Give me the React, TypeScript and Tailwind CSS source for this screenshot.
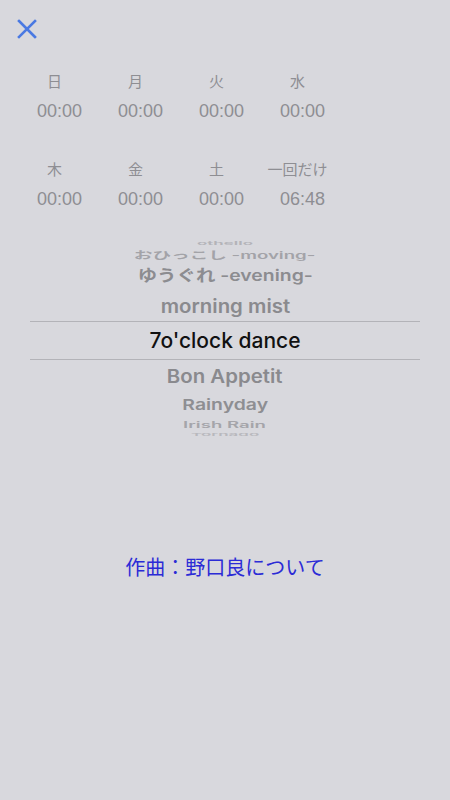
import React from "react";

const days = [
  { label: "日", time: "00:00" },
  { label: "月", time: "00:00" },
  { label: "火", time: "00:00" },
  { label: "水", time: "00:00" },
  { label: "木", time: "00:00" },
  { label: "金", time: "00:00" },
  { label: "土", time: "00:00" },
  { label: "一回だけ", time: "06:48" },
];

const DayCell = ({ label, time }: { label: string; time: string }) => (
  <div className="flex flex-col items-center">
    <div className="h-[20px] leading-[20px] text-[15px] text-[#8e8e93]">{label}</div>
    <div className="mt-[8px] pl-[10px] h-[22px] leading-[22px] text-[18px] text-[#8e8e93]">{time}</div>
  </div>
);

const App = () => {
  return (
    <div className="w-[450px] h-[800px] bg-[#d8d8dd] font-['Liberation_Sans','Noto_Sans_CJK_JP',sans-serif] overflow-hidden">
      <div className="pt-[19px] pl-[17px]">
        <svg width="20" height="20" viewBox="0 0 20 20">
          <path d="M2 2L18 18M18 2L2 18" stroke="#4a79e2" strokeWidth="2.6" strokeLinecap="square" />
        </svg>
      </div>

      <div className="ml-[14px] mt-[33px] w-[324px] grid grid-cols-4">
        {days.slice(0, 4).map((d) => (
          <DayCell key={d.label} {...d} />
        ))}
      </div>
      <div className="ml-[14px] mt-[38px] w-[324px] grid grid-cols-4">
        {days.slice(4).map((d) => (
          <DayCell key={d.label} {...d} />
        ))}
      </div>

      {/* picker wheel */}
      <div className="mx-[30px] mt-[28px] flex flex-col items-center overflow-hidden font-['Inter','Noto_Sans_CJK_JP',sans-serif]">
        <div className="h-[10px] w-full flex items-center justify-center overflow-hidden">
          <span className="text-[20px] font-semibold text-[#b3b3b8] scale-y-[0.25] scale-x-[0.85] whitespace-nowrap">
            othello
          </span>
        </div>
        <div className="h-[13px] w-full flex items-center justify-center">
          <span className="text-[20px] font-semibold text-[#a3a3a8] scale-y-[0.5] scale-x-[0.93] whitespace-nowrap">
            おひっこし -moving-
          </span>
        </div>
        <div className="h-[30px] w-full flex items-center justify-center">
          <span className="text-[20px] font-semibold text-[#8c8c90] scale-y-[0.78] scale-x-[0.97] whitespace-nowrap">
            ゆうぐれ -evening-
          </span>
        </div>
        <div className="h-[30px] w-full flex items-center justify-center">
          <span className="text-[20px] font-semibold text-[#8a8a8e] scale-y-[0.93] scale-x-[1.02] whitespace-nowrap">
            morning mist
          </span>
        </div>
        <div className="h-[39px] w-full border-y border-[#b3b3b8] flex items-center justify-center">
          <span className="text-[21px] font-medium text-[#111111] whitespace-nowrap">7o'clock dance</span>
        </div>
        <div className="h-[32px] w-full flex items-center justify-center">
          <span className="text-[20px] font-semibold text-[#8a8a8e] scale-y-[0.93] scale-x-[1.02] whitespace-nowrap">
            Bon Appetit
          </span>
        </div>
        <div className="h-[26px] w-full flex items-center justify-center">
          <span className="text-[20px] font-semibold text-[#8e8e92] scale-y-[0.75] scale-x-[0.97] whitespace-nowrap">
            Rainyday
          </span>
        </div>
        <div className="h-[14px] w-full flex items-center justify-center">
          <span className="text-[20px] font-semibold text-[#a5a5aa] scale-y-[0.45] scale-x-[0.93] whitespace-nowrap">
            Irish Rain
          </span>
        </div>
        <div className="h-[5px] w-full flex items-start justify-center overflow-hidden">
          <span className="text-[20px] font-semibold text-[#b8b8bd] scale-y-[0.2] scale-x-[0.85] whitespace-nowrap leading-[6px]">
            Tornado
          </span>
        </div>
      </div>

      <div className="mt-[117px] text-center">
        <a className="text-[20px] leading-[26px] text-[#2b2bd6] font-['Noto_Sans_CJK_JP',sans-serif]">
          作曲：野口良について
        </a>
      </div>
    </div>
  );
};

export default App;
